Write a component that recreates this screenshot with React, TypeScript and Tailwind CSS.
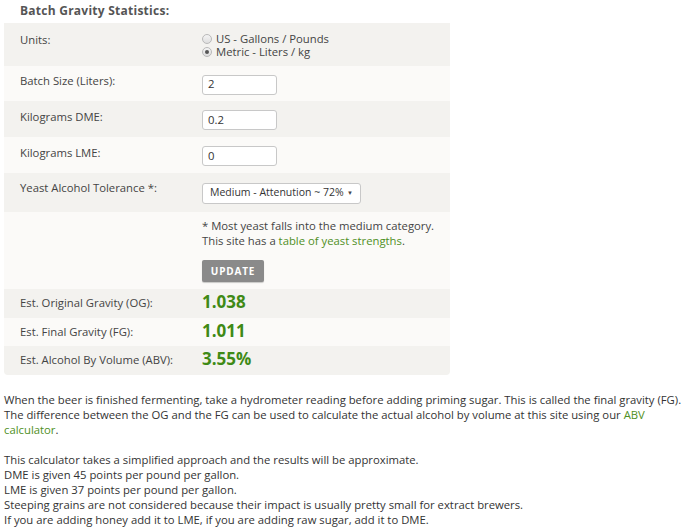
import React from "react";

const Radio = ({ checked }: { checked?: boolean }) => (
  <span className="inline-flex h-[10px] w-[10px] items-center justify-center rounded-full border border-[#b9b9b9] bg-gradient-to-b from-[#f4f4f4] to-[#dedede] mr-[4px]">
    {checked && <span className="h-[4px] w-[4px] rounded-full bg-[#555]" />}
  </span>
);

const Input = ({ value }: { value: string }) => (
  <div className="flex h-[20px] w-[75px] items-center rounded-[3px] border border-[#c8c8c8] bg-white pl-[5px] text-[11.3px] text-[#333]">
    {value}
  </div>
);

export default function App() {
  return (
    <div
      className="h-[532px] w-[682px] overflow-hidden bg-white text-[#444]"
      style={{ fontFamily: '"Open Sans", "Liberation Sans", sans-serif' }}
    >
      <div className="ml-[4px] w-[446px] overflow-hidden rounded-b-[4px]">
        <div className="flex h-[23px] items-center pl-[16px] pb-[2px] text-[12px] font-bold tracking-[0.25px] text-[#555]">
          Batch Gravity Statistics:
        </div>
        <div className="grid h-[43px] grid-cols-[198px_1fr] bg-[#f3f2ef] text-[11.3px]">
          <div className="pl-[16px] pt-[9px]">Units:</div>
          <div className="pt-[9px] leading-[13px]">
            <div className="flex items-center">
              <Radio />
              <span>US - Gallons / Pounds</span>
            </div>
            <div className="flex items-center">
              <Radio checked />
              <span>Metric - Liters / kg</span>
            </div>
          </div>
        </div>
        <div className="grid h-[35px] grid-cols-[198px_1fr] items-center bg-[#fbfaf8] text-[11.3px]">
          <div className="pl-[16px] pb-[4px]">Batch Size (Liters):</div>
          <div className="pt-[2px]"><Input value="2" /></div>
        </div>
        <div className="grid h-[36px] grid-cols-[198px_1fr] items-center bg-[#f3f2ef] text-[11.3px]">
          <div className="pl-[16px] pb-[4px]">Kilograms DME:</div>
          <div className="pt-[2px]"><Input value="0.2" /></div>
        </div>
        <div className="grid h-[36px] grid-cols-[198px_1fr] items-center bg-[#fbfaf8] text-[11.3px]">
          <div className="pl-[16px] pb-[4px]">Kilograms LME:</div>
          <div className="pt-[2px]"><Input value="0" /></div>
        </div>
        <div className="grid h-[39px] grid-cols-[198px_1fr] items-center bg-[#f3f2ef] text-[11.3px]">
          <div className="pl-[16px] pb-[8px]">Yeast Alcohol Tolerance *:</div>
          <div className="pt-[1px]">
            <div className="flex h-[21px] w-[159px] items-center whitespace-nowrap rounded-[3px] border border-[#c8c8c8] bg-white pl-[7px] pr-[7px] text-[10.5px] text-[#333]">
              <span>Medium - Attenution ~ 72%</span>
              <span className="ml-auto text-[6px] text-[#444]">▼</span>
            </div>
          </div>
        </div>
        <div className="grid h-[77px] grid-cols-[198px_1fr] bg-[#fbfaf8] text-[11.3px]">
          <div />
          <div className="pt-[6px] leading-[15px]">
            <div>* Most yeast falls into the medium category.</div>
            <div>
              This site has a <span className="text-[#4f8f25]">table of yeast strengths</span>.
            </div>
            <div className="mt-[12px] flex h-[22px] w-[62px] items-center justify-center rounded-[2px] bg-[#8a8a8a] text-[10px] font-bold tracking-[0.8px] text-white shadow-[0_1px_1px_rgba(0,0,0,0.2)]">
              UPDATE
            </div>
          </div>
        </div>
        <div className="grid h-[29px] grid-cols-[198px_1fr] items-center bg-[#f3f2ef]">
          <div className="pl-[16px] text-[11.3px]">Est. Original Gravity (OG):</div>
          <div className="pb-[3px] text-[17px] font-bold text-[#3f8a16]">1.038</div>
        </div>
        <div className="grid h-[28px] grid-cols-[198px_1fr] items-center bg-[#fbfaf8]">
          <div className="pl-[16px] text-[11.3px]">Est. Final Gravity (FG):</div>
          <div className="pb-[3px] text-[17px] font-bold text-[#3f8a16]">1.011</div>
        </div>
        <div className="grid h-[29px] grid-cols-[198px_1fr] items-center bg-[#f3f2ef]">
          <div className="pl-[16px] text-[11.3px]">Est. Alcohol By Volume (ABV):</div>
          <div className="pb-[3px] text-[17px] font-bold text-[#3f8a16]">3.55%</div>
        </div>
      </div>
      <div className="ml-[4px] mt-[17px] text-[11.3px] leading-[15px] text-[#333]">
        <p>
          When the beer is finished fermenting, take a hydrometer reading before adding priming sugar. This is called the final gravity (FG). The difference between the OG and the FG can be used to calculate the actual alcohol by volume at this site using our{" "}
          <span className="text-[#4f8f25]">ABV calculator</span>.
        </p>
        <p className="mt-[15px]">
          This calculator takes a simplified approach and the results will be approximate.
          <br />
          DME is given 45 points per pound per gallon.
          <br />
          LME is given 37 points per pound per gallon.
          <br />
          Steeping grains are not considered because their impact is usually pretty small for extract brewers.
          <br />
          If you are adding honey add it to LME, if you are adding raw sugar, add it to DME.
        </p>
      </div>
    </div>
  );
}
